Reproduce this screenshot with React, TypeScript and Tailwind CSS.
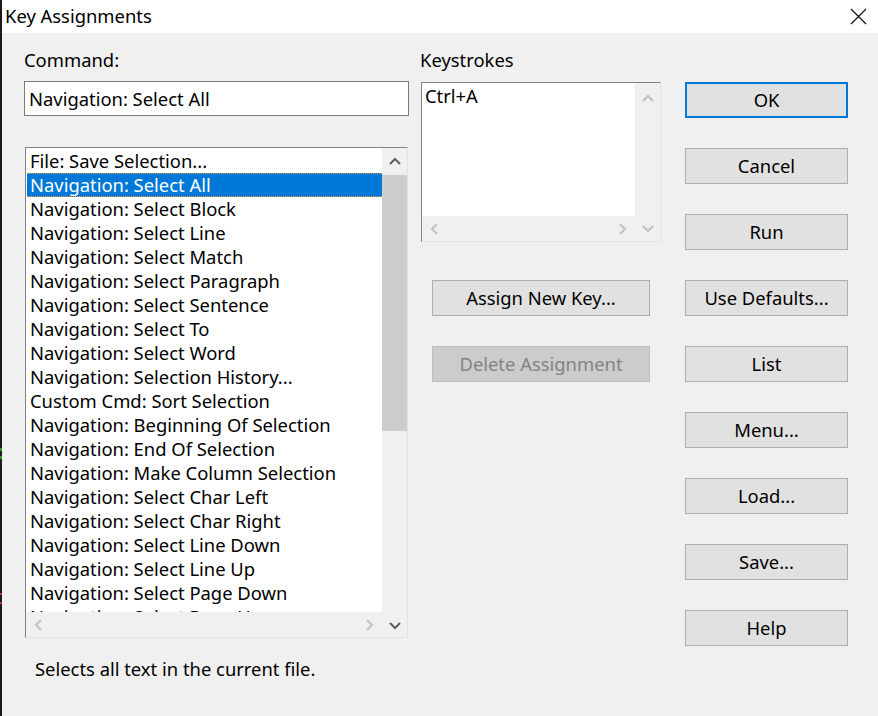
import React from "react"

const commands = [
  "File: Save Selection...",
  "Navigation: Select All",
  "Navigation: Select Block",
  "Navigation: Select Line",
  "Navigation: Select Match",
  "Navigation: Select Paragraph",
  "Navigation: Select Sentence",
  "Navigation: Select To",
  "Navigation: Select Word",
  "Navigation: Selection History...",
  "Custom Cmd: Sort Selection",
  "Navigation: Beginning Of Selection",
  "Navigation: End Of Selection",
  "Navigation: Make Column Selection",
  "Navigation: Select Char Left",
  "Navigation: Select Char Right",
  "Navigation: Select Line Down",
  "Navigation: Select Line Up",
  "Navigation: Select Page Down",
  "Navigation: Select Page Up",
]

const sideButtons = ["OK", "Cancel", "Run", "Use Defaults...", "List", "Menu...", "Load...", "Save...", "Help"]

type Dir = "up" | "down" | "left" | "right"

// small scrollbar chevrons
function Chevron({ dir, on }: { dir: Dir; on?: boolean }) {
  const pts = {
    up: "2,9 7,4 12,9",
    down: "2,5 7,10 12,5",
    left: "9,2 4,7 9,12",
    right: "5,2 10,7 5,12",
  }[dir]
  return (
    <svg width="14" height="14" viewBox="0 0 14 14">
      <polyline points={pts} fill="none" stroke={on ? "#606060" : "#c2c2c2"} strokeWidth="2" />
    </svg>
  )
}

function Button({ label, focused }: { label: string; focused?: boolean }) {
  return (
    <div
      className={`h-[36px] flex items-center justify-center bg-[#e1e1e1] text-[18.4px] text-black ${
        focused ? "border-2 border-[#0078d7]" : "border border-[#adadad]"
      }`}
    >
      {label}
    </div>
  )
}

export default function App() {
  return (
    <div className="w-[878px] h-[716px] flex bg-[#f0f0f0] overflow-hidden" style={{ fontFamily: '"Noto Sans", "Open Sans", sans-serif' }}>
      {/* edge of the window behind */}
      <div className="w-[2px] flex flex-col bg-[#1b1b1b]">
        <div className="h-[448px]" />
        <div className="h-[3px] bg-[#1fa02f]" />
        <div className="h-[5px]" />
        <div className="h-[3px] bg-[#1fa02f]" />
        <div className="h-[134px]" />
        <div className="h-[2px] bg-[#c83232]" />
        <div className="h-[7px]" />
        <div className="h-[2px] bg-[#c83232]" />
      </div>

      <div className="flex-1 flex flex-col">
        {/* Title bar */}
        <div className="h-[33px] bg-white flex items-center justify-between pl-[3px] pr-[11px]">
          <span className="text-[18.4px] text-black leading-none">Key Assignments</span>
          <svg width="17" height="17" viewBox="0 0 17 17">
            <path d="M1 1 L16 16 M16 1 L1 16" stroke="#111" strokeWidth="1.2" />
          </svg>
        </div>

        {/* Body */}
        <div className="flex-1 flex pl-[22px] pt-[16px] text-[18.4px] text-black">
          {/* Left column */}
          <div className="w-[385px] flex flex-col">
            <div className="h-[22px] leading-[22px]">Command:</div>
            <div className="mt-[10px] h-[35px] bg-white border border-[#7a7a7a] flex items-center pl-[4px]">
              Navigation: Select All
            </div>
            <div className="mt-[31px] ml-[1px] w-[383px] h-[491px] flex border border-t-[#828282] border-l-[#828282] border-r-[#e3e3e3] border-b-[#e3e3e3]">
              <div className="flex-1 flex flex-col">
                <div className="flex-1 bg-white overflow-hidden pt-[1px]">
                  {commands.map((c, i) => (
                    <div
                      key={c}
                      className={`h-[24px] leading-[22px] ml-[1px] pl-[3px] whitespace-nowrap ${
                        i === 1
                          ? "bg-[#0078d7] text-white border-y border-dotted border-[#f0a040]"
                          : "border-y border-transparent"
                      }`}
                    >
                      {c}
                    </div>
                  ))}
                </div>
                <div className="h-[25px] bg-[#f0f0f0] flex items-center justify-between px-[6px]">
                  <Chevron dir="left" />
                  <Chevron dir="right" />
                </div>
              </div>
              <div className="w-[25px] flex flex-col bg-[#f0f0f0]">
                <div className="h-[27px] flex items-center justify-center">
                  <Chevron dir="up" on />
                </div>
                <div className="h-[256px] bg-[#cdcdcd]" />
                <div className="flex-1" />
                <div className="h-[25px] flex items-center justify-center">
                  <Chevron dir="down" on />
                </div>
              </div>
            </div>
            <div className="mt-[20px] pl-[11px] h-[22px] leading-[22px]">Selects all text in the current file.</div>
          </div>

          {/* Middle column */}
          <div className="ml-[12px] w-[240px] flex flex-col">
            <div className="h-[22px] leading-[22px] -ml-[1px]">Keystrokes</div>
            <div className="mt-[11px] h-[160px] flex border border-t-[#828282] border-l-[#828282] border-r-[#e3e3e3] border-b-[#e3e3e3]">
              <div className="flex-1 flex flex-col">
                <div className="flex-1 bg-white pl-[3px] leading-[26px]">Ctrl+A</div>
                <div className="h-[25px] bg-[#f0f0f0] flex items-center justify-between px-[6px]">
                  <Chevron dir="left" />
                  <Chevron dir="right" />
                </div>
              </div>
              <div className="w-[25px] flex flex-col justify-between bg-[#f0f0f0] pt-[9px] pb-[6px] items-center">
                <Chevron dir="up" />
                <Chevron dir="down" />
              </div>
            </div>
            <div className="mt-[38px] ml-[11px] w-[218px]">
              <Button label="Assign New Key..." />
            </div>
            <div className="mt-[30px] ml-[11px] w-[218px] h-[36px] flex items-center justify-center bg-[#cccccc] border border-[#bfbfbf] text-[#838383]">
              Delete Assignment
            </div>
          </div>

          {/* Right column */}
          <div className="ml-[24px] w-[163px] pt-[33px] flex flex-col gap-[30px]">
            {sideButtons.map((b, i) => (
              <Button key={b} label={b} focused={i === 0} />
            ))}
          </div>
        </div>
      </div>
    </div>
  )
}
